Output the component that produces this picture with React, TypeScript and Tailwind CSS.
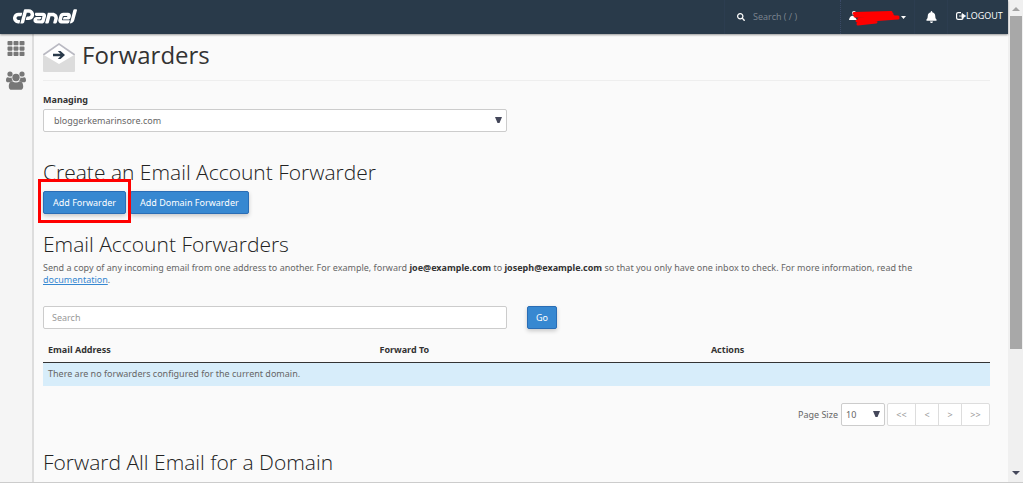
import type { ReactNode } from "react";
import { FaBell, FaCpanel, FaSearch, FaTh } from "react-icons/fa";

const columns = [
  { label: "Email Address", width: "w-[35%]" },
  { label: "Forward To", width: "w-[35%]" },
  { label: "Actions", width: "w-[30%]" },
];
const pages = [
  { label: "<<", width: "w-[29px]" },
  { label: "<", width: "w-6" },
  { label: ">", width: "w-6" },
  { label: ">>", width: "w-[29px]" },
];

function PrimaryButton({ children, padding = "px-[9px]" }: { children: ReactNode; padding?: string }) {
  return (
    <button
      className={`h-[23px] rounded-xs border border-[#2a6db5] bg-[#3788d1] text-white leading-4 shadow-[0_2px_4px_rgba(0,0,0,0.2)] ${padding}`}
    >
      {children}
    </button>
  );
}

function Heading({ children }: { children: ReactNode }) {
  return <h2 className="font-['Open_Sans',sans-serif] text-[21px] leading-6 font-light text-[#222]">{children}</h2>;
}

function Caret() {
  return (
    <svg viewBox="0 0 7 6" className="absolute right-[5px] top-2 w-[7px] h-[6px] pointer-events-none">
      <path d="M0 0h7L4.500 6h-2z" fill="#44475a" />
    </svg>
  );
}

function UsersIcon() {
  return (
    <svg viewBox="0 0 20 19" className="w-5 h-[19px]" fill="#777">
      <circle cx="4" cy="3" r="2.6" />
      <circle cx="16" cy="3" r="2.6" />
      <path d="M2 6.2c1.300.8 2.600.7 3.600.2 0 1.400.4 2.600 1.200 3.600-1.200.1-2 .6-2.800 1.300H2C.8 11.300 0 10.700 0 9.500 0 7.800.5 6 2 6.200z" />
      <path d="M18 6.200c-1.300.8-2.600.7-3.600.2 0 1.400-.4 2.600-1.200 3.600 1.200.1 2 .6 2.800 1.300h2c1.200 0 2-.6 2-1.800 0-1.700-.5-3.500-2-3.300z" />
      <circle cx="10" cy="6.500" r="3.700" />
      <path d="M6.300 10.300c2.300 1.700 5.100 1.700 7.400 0 2.500 0 3.500 2.500 3.500 5.400 0 1.900-1.100 3.100-2.900 3.100H5.700c-1.800 0-2.900-1.200-2.900-3.100 0-2.900 1-5.400 3.500-5.400z" />
    </svg>
  );
}

function ForwarderIcon() {
  return (
    <svg viewBox="0 0 32 29" className="w-8 h-[29px]">
      <path d="M0 11 16 0l16 11v3H0z" fill="#b9b9c2" />
      <path d="M1 12.500 16 2l15 10.500V24H1z" fill="#fff" />
      <path d="M0 11.500 16 21l16-9.500V28a1 1 0 0 1-1 1H1a1 1 0 0 1-1-1z" fill="#dcdcdc" />
      <path d="M10 10.800h7.500L14.800 8h2.700l4.500 4-4.500 4h-2.700l2.700-2.800H10z" fill="#293a4a" />
    </svg>
  );
}

function LogoutIcon() {
  return (
    <svg viewBox="0 0 10 8" className="w-[10px] h-2" fill="none" stroke="#fff">
      <path d="M5 .6H2.200Q.6.600.6 2v4q0 1.400 1.600 1.400H5.500Q7 7.400 7 6" strokeWidth="1.200" />
      <path d="M3 4h3V1.600L9.600 4 6 6.400V4" fill="#fff" strokeWidth=".8" />
    </svg>
  );
}

function Header() {
  return (
    <header className="relative z-10 flex items-stretch h-[34px] bg-[#293a4a] font-['Open_Sans',sans-serif] text-white shadow-[0_1px_2px_rgba(0,0,0,0.4)]">
      <a href="#home" aria-label="cPanel" className="flex items-center pl-[13px]">
        <FaCpanel className="w-16 h-16 -my-4" />
      </a>
      <div className="ml-auto flex w-[116px] items-center gap-2 border-l border-[#2c3d50] pl-3">
        <FaSearch className="w-2 h-2 shrink-0" />
        <input
          aria-label="Search"
          placeholder="Search ( / )"
          className="w-20 bg-transparent text-[9px] leading-3 outline-none placeholder:text-[#7d8590]"
        />
      </div>
      <button aria-label="Account" className="flex w-[74px] items-center border-l border-dotted border-[#3a4a66] pl-2">
        <svg viewBox="0 0 60 20" className="w-[60px] h-5">
          <circle cx="5" cy="6" r="2" fill="#fff" />
          <path d="M0 13q1-5 5-4l3 4z" fill="#fff" />
          <path d="M52 9h5l-2.500 3z" fill="#fff" />
          <path d="M5 6.500 42 5.500M8 9 43 7M10 12l34-3M6 9l43 1M8 14l41-3M9 17l18-2" fill="none" stroke="#f00" strokeWidth="3" strokeLinecap="round" />
        </svg>
      </button>
      <button aria-label="Notifications" className="flex w-[33px] items-center justify-center border-l border-[#2c3d50]">
        <FaBell className="w-[11px] h-3" />
      </button>
      <a href="#logout" className="flex w-[61px] items-center border-l border-[#2c3d50] pl-2 pb-[2px] text-[9px] leading-3">
        <LogoutIcon />
        LOGOUT
      </a>
    </header>
  );
}

export default function App() {
  return (
    <div className="flex h-screen overflow-hidden border-b border-[#ccc] bg-[#fafafa] font-['Noto_Sans',sans-serif] text-[9px] text-[#666]">
      <div className="flex flex-1 min-w-0 flex-col">
        <Header />
        <div className="flex flex-1 min-h-0">
          <nav className="flex w-[34px] shrink-0 flex-col items-center gap-[14px] border-r-2 border-[#ddd] bg-[#f5f5f5] pt-[6px]">
            <a href="#apps" aria-label="Applications" className="text-[#777]">
              <FaTh className="w-5 h-[17px]" />
            </a>
            <a href="#users" aria-label="Users">
              <UsersIcon />
            </a>
          </nav>

          <main className="flex-1 min-w-0 overflow-hidden pl-[9px] pr-[18px]">
            <h1 className="flex h-[47px] items-center gap-[7px] border-b border-[#eee] font-['Open_Sans',sans-serif] text-2xl font-normal text-[#333]">
              <ForwarderIcon />
              <span className="pb-1">Forwarders</span>
            </h1>

            <label htmlFor="domain" className="mt-[11px] block leading-4 font-bold text-[#333]">
              Managing
            </label>
            <div className="relative mt-px w-[49%]">
              <select id="domain" className="block w-full h-[23px] appearance-none rounded-xs border border-[#ccc] bg-white px-[10px]">
                <option>bloggerkemarinsore.com</option>
              </select>
              <Caret />
            </div>

            <section className="mt-7">
              <Heading>Create an Email Account Forwarder</Heading>
              <div className="mt-[7px] flex gap-1">
                <div className="relative">
                  <PrimaryButton>Add Forwarder</PrimaryButton>
                  <div className="absolute -inset-x-[5px] -top-3 -bottom-[9px] border-3 border-[#f00] pointer-events-none" />
                </div>
                <PrimaryButton>Add Domain Forwarder</PrimaryButton>
              </div>
            </section>

            <section className="mt-[18px]">
              <Heading>Email Account Forwarders</Heading>
              <p className="mt-[6px] pr-8 leading-3">
                Send a copy of any incoming email from one address to another. For example, forward{" "}
                <b className="text-[#333]">joe@example.com</b> to <b className="text-[#333]">joseph@example.com</b> so that you
                only have one inbox to check. For more information, read the{" "}
                <a href="#documentation" className="text-[#3788d1] underline">
                  documentation
                </a>
                .
              </p>

              <div className="mt-5 flex gap-5">
                <input
                  aria-label="Search forwarders"
                  placeholder="Search"
                  className="w-[49%] h-[23px] rounded-xs border border-[#ccc] bg-white px-2 placeholder:text-[#999]"
                />
                <PrimaryButton padding="px-2">Go</PrimaryButton>
              </div>

              <table className="mt-[10px] w-full table-fixed text-left leading-4">
                <thead className="text-[#333]">
                  <tr className="h-[23px] border-b border-[#333]">
                    {columns.map((c) => (
                      <th key={c.label} className={`px-[5px] font-bold ${c.width}`}>{c.label}</th>
                    ))}
                  </tr>
                </thead>
                <tbody>
                  <tr className="h-6 bg-[#d7edfa]">
                    <td colSpan={3} className="px-[5px]">There are no forwarders configured for the current domain.</td>
                  </tr>
                </tbody>
              </table>

              <div className="mt-[17px] flex items-center justify-end">
                <label htmlFor="size">Page Size</label>
                <div className="relative ml-[3px] mr-[2px]">
                  <select id="size" className="block w-11 h-[23px] appearance-none rounded-xs border border-[#ccc] bg-white px-1">
                    <option>10</option>
                  </select>
                  <Caret />
                </div>
                <div className="flex">
                  {pages.map((p) => (
                    <button key={p.label} className={`h-[23px] -ml-px first:ml-0 first:rounded-l-xs last:rounded-r-xs border border-[#ddd] bg-white text-[#999] ${p.width}`}>
                      {p.label}
                    </button>
                  ))}
                </div>
              </div>
            </section>

            <section className="mt-6">
              <Heading>Forward All Email for a Domain</Heading>
            </section>
          </main>
        </div>
      </div>

      <div className="flex w-[15px] shrink-0 flex-col items-center bg-[#f0f0f0] pl-px">
        <svg viewBox="0 0 8 4" className="mt-[7px] mb-[5px] w-2 h-1 shrink-0">
          <path d="M0 4 4 0l4 4z" fill="#a3a3a3" />
        </svg>
        <div className="w-3 h-[69%] bg-[#a8a8a8]" />
        <svg viewBox="0 0 8 4" className="mt-auto mb-[7px] w-2 h-1 shrink-0">
          <path d="M0 0h8L4 4z" fill="#44475a" />
        </svg>
      </div>
    </div>
  );
}
